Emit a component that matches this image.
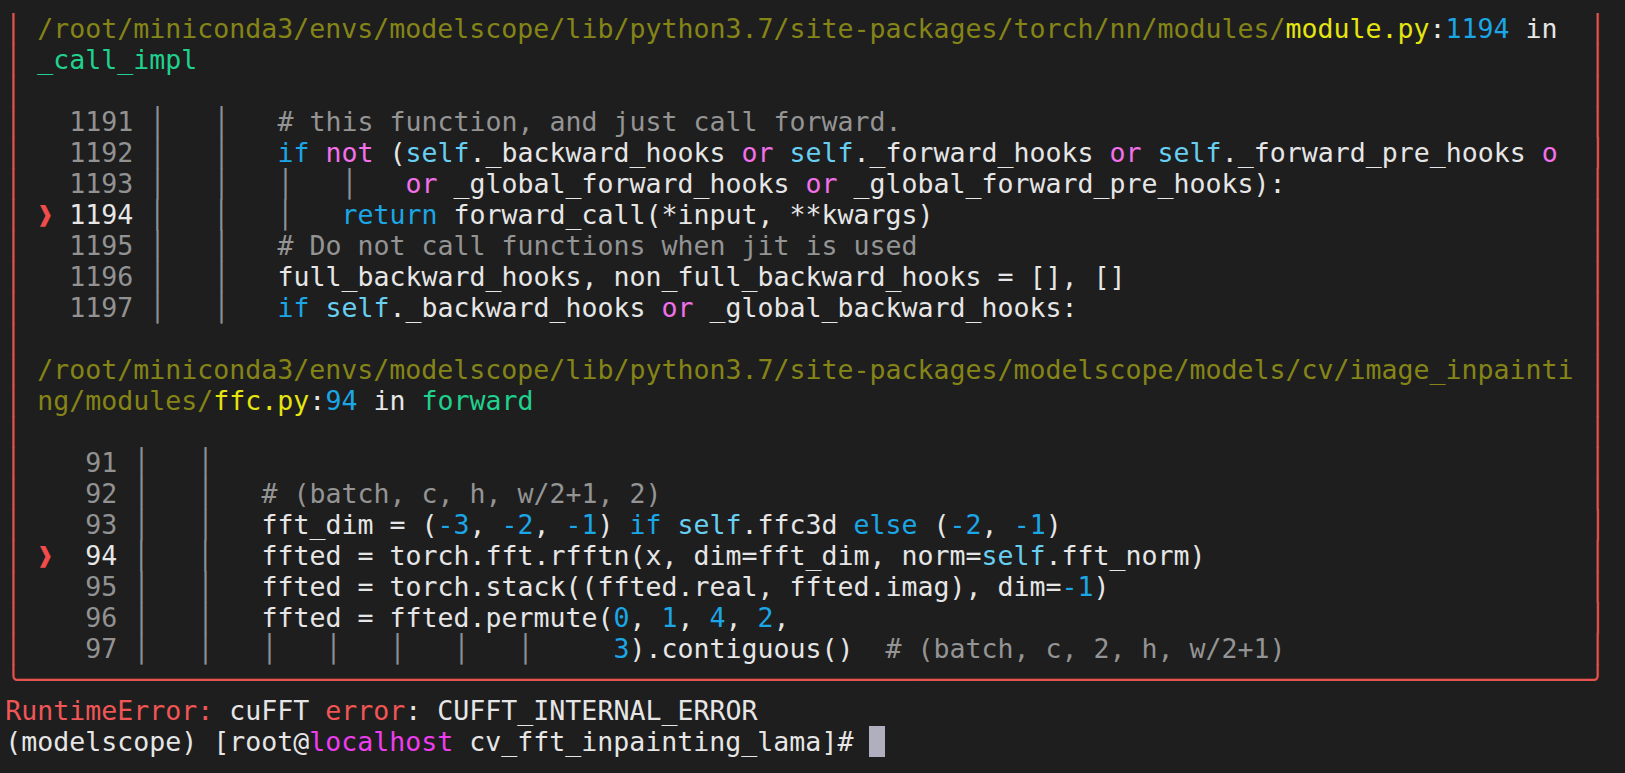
import React from 'react'

type Seg = [string, string]

// terminal palette
const W = 'text-[#e6e6e6]'
const DY = 'text-[#858517]'
const Y = 'text-[#e5e510]'
const B = 'text-[#1ba6e6]'
const S = 'text-[#68cff2]'
const M = 'text-[#f270e9]'
const G = 'text-[#20d18d]'
const C = 'text-[#949494]'
const N = 'text-[#929292]'
const R = 'text-[#f15656]'
const P = 'text-[#ee3dee]'
const BORDER = 'text-[#e5534f]'
const GUIDE = 'text-[#8c9096]'
const MARK = 'MARK'

const g = (n: number): Seg[] => [['│   '.repeat(n), GUIDE]]

const len = (segs: Seg[]) => segs.reduce((a, s) => a + s[0].length, 0)

function boxRow(content: Seg[]): Seg[] {
  const l = len(content)
  const padded: Seg[] = l < 98 ? [...content, [' '.repeat(98 - l), W]] : content
  return [['│', BORDER], ...padded, ['│', BORDER]]
}

function codeLine(num: string, numW: number, active: boolean, code: Seg[]): Seg[] {
  return boxRow([
    [' ', W],
    [active ? '❱' : ' ', active ? MARK : W],
    [num.padStart(numW), active ? W : N],
    [' ', W],
    ...code,
  ])
}

const rows: Seg[][] = [
  boxRow([
    [' ', W],
    ['/root/miniconda3/envs/modelscope/lib/python3.7/site-packages/torch/nn/modules/', DY],
    ['module.py', Y],
    [':', W],
    ['1194', B],
    [' in', W],
  ]),
  boxRow([[' ', W], ['_call_impl', G]]),
  boxRow([]),
  codeLine('1191', 5, false, [...g(2), ['# this function, and just call forward.', C]]),
  codeLine('1192', 5, false, [
    ...g(2),
    ['if', B], [' ', W], ['not', M], [' (', W], ['self', S], ['._backward_hooks ', W],
    ['or', M], [' ', W], ['self', S], ['._forward_hooks ', W],
    ['or', M], [' ', W], ['self', S], ['._forward_pre_hooks ', W], ['o', M],
  ]),
  codeLine('1193', 5, false, [
    ...g(4),
    ['or', M], [' _global_forward_hooks ', W], ['or', M], [' _global_forward_pre_hooks):', W],
  ]),
  codeLine('1194', 5, true, [...g(3), ['return', B], [' forward_call(*input, **kwargs)', W]]),
  codeLine('1195', 5, false, [...g(2), ['# Do not call functions when jit is used', C]]),
  codeLine('1196', 5, false, [...g(2), ['full_backward_hooks, non_full_backward_hooks = [], []', W]]),
  codeLine('1197', 5, false, [
    ...g(2),
    ['if', B], [' ', W], ['self', S], ['._backward_hooks ', W], ['or', M], [' _global_backward_hooks:', W],
  ]),
  boxRow([]),
  boxRow([
    [' ', W],
    ['/root/miniconda3/envs/modelscope/lib/python3.7/site-packages/modelscope/models/cv/image_inpainti', DY],
  ]),
  boxRow([[' ', W], ['ng/modules/', DY], ['ffc.py', Y], [':', W], ['94', B], [' in ', W], ['forward', G]]),
  boxRow([]),
  codeLine('91', 4, false, [['│   │', GUIDE]]),
  codeLine('92', 4, false, [...g(2), ['# (batch, c, h, w/2+1, 2)', C]]),
  codeLine('93', 4, false, [
    ...g(2),
    ['fft_dim = (', W], ['-3', B], [', ', W], ['-2', B], [', ', W], ['-1', B], [') ', W],
    ['if', B], [' ', W], ['self', S], ['.ffc3d ', W], ['else', B], [' (', W],
    ['-2', B], [', ', W], ['-1', B], [')', W],
  ]),
  codeLine('94', 4, true, [
    ...g(2),
    ['ffted = torch.fft.rfftn(x, dim=fft_dim, norm=', W], ['self', S], ['.fft_norm)', W],
  ]),
  codeLine('95', 4, false, [
    ...g(2),
    ['ffted = torch.stack((ffted.real, ffted.imag), dim=', W], ['-1', B], [')', W],
  ]),
  codeLine('96', 4, false, [
    ...g(2),
    ['ffted = ffted.permute(', W], ['0', B], [', ', W], ['1', B], [', ', W], ['4', B], [', ', W], ['2', B], [',', W],
  ]),
  codeLine('97', 4, false, [
    ...g(7),
    ['  ', W], ['3', B], [').contiguous()  ', W], ['# (batch, c, 2, h, w/2+1)', C],
  ]),
  [['╰' + '─'.repeat(98) + '╯', BORDER]],
  [['RuntimeError:', R], [' cuFFT ', W], ['error', R], [': CUFFT_INTERNAL_ERROR', W]],
]

function Line({ segs }: { segs: Seg[] }) {
  return (
    <div className="h-[31px]">
      {segs.map((s, i) =>
        s[1] === MARK ? (
          <span key={i} className="inline-block w-[16px] text-[#f14c4c]">{s[0]}</span>
        ) : (
          <span key={i} className={s[1]}>{s[0]}</span>
        )
      )}
    </div>
  )
}

export default function App() {
  return (
    <div className="min-h-screen w-full overflow-hidden bg-[#1e1e1e] pl-[5.3px] pt-[13px] font-['DejaVu_Sans_Mono','Liberation_Mono',monospace] text-[26.58px] leading-[31px] whitespace-pre">
      {rows.map((r, i) => (
        <Line key={i} segs={r} />
      ))}
      <div className="h-[31px]">
        <span className={W}>(modelscope) [root@</span>
        <span className={P}>localhost</span>
        <span className={W}> cv_fft_inpainting_lama]# </span>
        <span className="bg-[#b0afc0]"> </span>
      </div>
    </div>
  )
}
